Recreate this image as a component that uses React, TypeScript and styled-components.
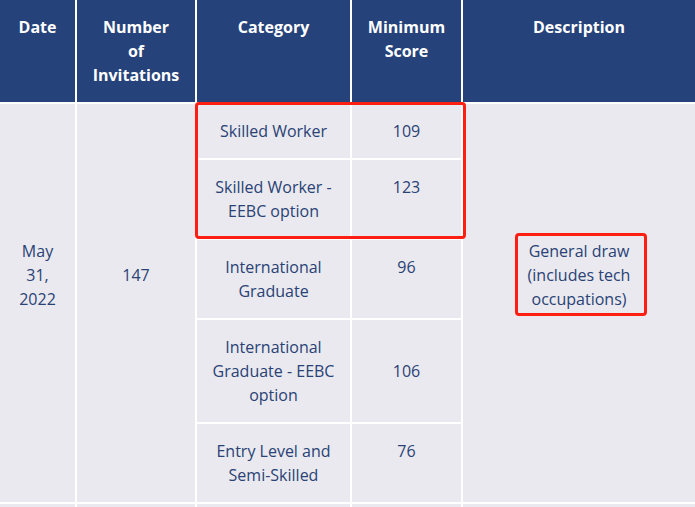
import React from 'react';
import styled, { createGlobalStyle } from 'styled-components';

const GlobalStyle = createGlobalStyle`
  html, body {
    margin: 0;
    padding: 0;
    background: #ffffff;
  }
  body {
    font-family: "Open Sans", "Noto Sans", "Liberation Sans", sans-serif;
  }
`;

const Wrapper = styled.div`
  position: relative;
  width: 695px;
  height: 507px;
  overflow: hidden;
`;

const Table = styled.table`
  width: 695px;
  table-layout: fixed;
  border-collapse: collapse;
  border-style: hidden;
  font-size: 16px;
  line-height: 24px;
`;

const HeadCell = styled.th`
  background: #26427a;
  color: #ffffff;
  font-weight: 700;
  text-align: center;
  vertical-align: top;
  padding: 15px 8px;
  border: 2px solid #ffffff;
`;

const Cell = styled.td<{ $valign?: 'top' | 'middle'; $lift?: boolean }>`
  background: #e9e9ef;
  color: #2a4275;
  text-align: center;
  vertical-align: ${(p) => p.$valign ?? 'top'};
  padding: ${(p) => (p.$lift ? '15px 8px 71px' : '15px 8px')};
  border: 2px solid #ffffff;
`;

const Highlight = styled.div<{ $x: number; $y: number; $w: number; $h: number }>`
  position: absolute;
  left: ${(p) => p.$x}px;
  top: ${(p) => p.$y}px;
  width: ${(p) => p.$w}px;
  height: ${(p) => p.$h}px;
  box-sizing: border-box;
  border: 3px solid #ff1e12;
  border-radius: 4px;
  pointer-events: none;
`;

const categories = [
  { name: 'Skilled Worker', score: '109', valign: 'top' as const },
  { name: 'Skilled Worker - EEBC option', score: '123', valign: 'top' as const },
  { name: 'International Graduate', score: '96', valign: 'top' as const },
  { name: 'International Graduate - EEBC option', score: '106', valign: 'middle' as const },
  { name: 'Entry Level and Semi-Skilled', score: '76', valign: 'top' as const },
];

export default function App() {
  return (
    <Wrapper>
      <GlobalStyle />
      <Table>
        <colgroup>
          <col style={{ width: 76 }} />
          <col style={{ width: 120 }} />
          <col style={{ width: 155 }} />
          <col style={{ width: 111 }} />
          <col style={{ width: 233 }} />
        </colgroup>
        <thead>
          <tr>
            <HeadCell>Date</HeadCell>
            <HeadCell>
              Number
              <br />
              of
              <br />
              Invitations
            </HeadCell>
            <HeadCell>Category</HeadCell>
            <HeadCell>
              Minimum
              <br />
              Score
            </HeadCell>
            <HeadCell>Description</HeadCell>
          </tr>
        </thead>
        <tbody>
          {categories.map((c, i) => (
            <tr key={c.name}>
              {i === 0 && (
                <>
                  <Cell rowSpan={5} $valign="middle" $lift>
                    May
                    <br />
                    31,
                    <br />
                    2022
                  </Cell>
                  <Cell rowSpan={5} $valign="middle" $lift>
                    147
                  </Cell>
                </>
              )}
              <Cell>{c.name}</Cell>
              <Cell $valign={c.valign}>{c.score}</Cell>
              {i === 0 && (
                <Cell rowSpan={5} $valign="middle" $lift>
                  General draw
                  <br />
                  (includes tech
                  <br />
                  occupations)
                </Cell>
              )}
            </tr>
          ))}
          <tr>
            <Cell>&nbsp;</Cell>
            <Cell>&nbsp;</Cell>
            <Cell>&nbsp;</Cell>
            <Cell>&nbsp;</Cell>
            <Cell>&nbsp;</Cell>
          </tr>
        </tbody>
      </Table>
      <Highlight $x={195} $y={102} $w={271} $h={137} />
      <Highlight $x={515} $y={233} $w={132} $h={83} />
    </Wrapper>
  );
}
